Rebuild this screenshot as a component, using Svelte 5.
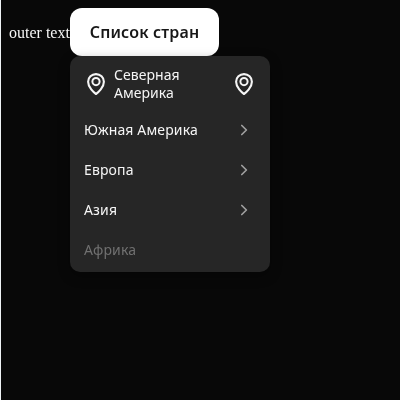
<script>
  const items = [
    { label: 'Северная Америка', left: true, right: 'pin' },
    { label: 'Южная Америка', right: 'chevron' },
    { label: 'Европа', right: 'chevron' },
    { label: 'Азия', right: 'chevron' },
    { label: 'Африка', disabled: true }
  ];
</script>

{#snippet pin()}
  <svg class="pin" viewBox="0 0 24 24" width="24" height="24" fill="none" stroke="currentColor">
    <path d="M12 22C9.8 20.6 4.1 15.4 4.1 9.8C4.1 5.5 7.6 2.1 12 2.1S19.9 5.5 19.9 9.8C19.9 15.4 14.2 20.6 12 22Z" stroke-width="2.1" stroke-linejoin="round" />
    <circle cx="12" cy="9.6" r="3.6" stroke-width="2" />
  </svg>
{/snippet}

<main>
  <span class="outer">outer text</span>
  <div class="dropdown">
    <button>Список стран</button>
    <ul>
      {#each items as item}
        <li class:disabled={item.disabled}>
          {#if item.left}{@render pin()}{/if}
          <span class="label">{item.label}</span>
          {#if item.right === 'pin'}
            {@render pin()}
          {:else if item.right}
            <svg class="chevron" viewBox="0 0 24 24" width="24" height="24" fill="none" stroke="currentColor">
              <path d="M9.8 7.5L14.4 12L9.8 16.5" stroke-width="1.7" stroke-linecap="round" stroke-linejoin="round" />
            </svg>
          {/if}
        </li>
      {/each}
    </ul>
  </div>
</main>

<style>
  :global(body) {
    margin: 0;
    background: #080808;
  }
  main {
    box-sizing: border-box;
    display: flex;
    align-items: flex-start;
    height: 400px;
    padding: 8px;
    border-left: 1px solid #eef2f5;
    background: #080808;
    overflow: hidden;
  }
  .outer {
    flex: none;
    color: #f5f5f5;
    font: 16px/18px "Liberation Serif", serif;
    padding-top: 16px;
    will-change: transform;
  }
  .dropdown {
    width: 200px;
    font-family: "Noto Sans", sans-serif;
    will-change: transform;
  }
  button {
    display: block;
    box-sizing: border-box;
    width: 149px;
    height: 48px;
    padding: 0;
    border: 0;
    border-radius: 12px;
    background: #fff;
    color: #171717;
    font: 600 16px/20px "Noto Sans", sans-serif;
    letter-spacing: 0.15px;
    white-space: nowrap;
  }
  ul {
    margin: 0;
    padding: 2px 0;
    list-style: none;
    border-radius: 10px;
    background: #262626;
    box-shadow: 0 4px 12px rgba(0, 0, 0, 0.35);
  }
  li {
    display: flex;
    align-items: center;
    box-sizing: border-box;
    min-height: 40px;
    padding: 8px 14px;
    color: #f5f5f5;
    font-size: 14px;
    line-height: 18px;
    letter-spacing: 0.14px;
  }
  li:first-child {
    min-height: 52px;
    letter-spacing: 0.04px;
  }
  .label {
    flex: 1;
  }
  .pin + .label {
    margin: 0 6px;
  }
  svg {
    flex: none;
    display: block;
  }
  .chevron {
    color: #a0a0a0;
  }
  .disabled {
    color: #707070;
  }
</style>
